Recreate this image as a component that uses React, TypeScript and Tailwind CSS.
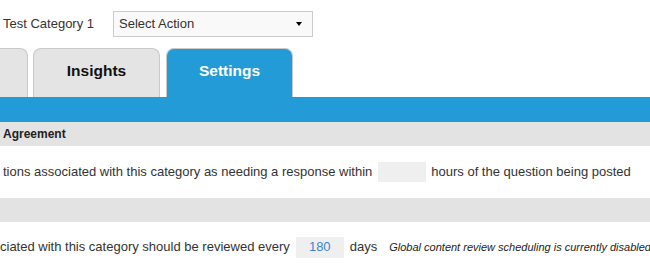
import React from "react";

export default function App() {
  return (
    <div
      className="w-[650px] h-[269px] overflow-hidden bg-white text-[#333]"
      style={{ fontFamily: '"Liberation Sans", Arial, sans-serif' }}
    >
      {/* top row */}
      <div className="h-[48px] pt-[11px] flex items-start whitespace-nowrap">
        <div className="h-[26px] flex items-center pl-[3px] text-[13px] w-[113px]">
          Test Category 1
        </div>
        <div className="h-[26px] w-[200px] border border-[#cccccc] bg-[#f9f9f9] flex items-center justify-between pl-[5px] pr-[10px] text-[13px]">
          <span>Select Action</span>
          <span className="w-0 h-0 border-l-[3.5px] border-r-[3.5px] border-t-[4px] border-l-transparent border-r-transparent border-t-black" />
        </div>
      </div>

      {/* tabs */}
      <div className="h-[49px] flex items-end whitespace-nowrap">
        <div className="ml-[-99px] w-[127px] h-[49px] shrink-0 rounded-t-[8px] border border-b-0 border-[#c9c9c9] bg-[#e4e4e4]" />
        <div className="ml-[5px] w-[127px] h-[49px] shrink-0 rounded-t-[8px] border border-b-0 border-[#c9c9c9] bg-[#e4e4e4] pt-[13px] text-center text-[15.5px] leading-[18px] font-bold text-[#111]">
          Insights
        </div>
        <div className="ml-[6px] w-[127px] h-[49px] shrink-0 rounded-t-[8px] border border-b-0 border-[#c9c9c9] bg-[#229bd6] pt-[13px] text-center text-[15.5px] leading-[18px] font-bold text-white">
          Settings
        </div>
      </div>

      {/* blue bar */}
      <div className="h-[25px] bg-[#229bd6]" />

      {/* header */}
      <div className="h-[24px] bg-[#e3e3e3] flex items-center pl-[3px] text-[12px] font-bold text-[#222]">
        Agreement
      </div>

      {/* row 1 */}
      <div className="h-[52px] flex items-center pl-[3px] text-[13px] whitespace-nowrap">
        <span>tions associated with this category as needing a response within</span>
        <span className="ml-[6px] w-[48px] h-[20px] shrink-0 bg-[#efefef]" />
        <span className="ml-[5px]">hours of the question being posted</span>
      </div>

      {/* gray spacer row */}
      <div className="h-[24px] bg-[#e3e3e3]" />

      {/* row 2 */}
      <div className="h-[50px] flex items-center text-[13px] whitespace-nowrap">
        <span>ciated with this category should be reviewed every</span>
        <span className="ml-[6px] w-[48px] h-[21px] shrink-0 bg-[#efefef] flex items-center justify-center text-[#3b86cf]">
          180
        </span>
        <span className="ml-[6px]">days</span>
        <span className="ml-[12px] text-[11px] italic text-[#222]">
          Global content review scheduling is currently disabled.
        </span>
      </div>
    </div>
  );
}
